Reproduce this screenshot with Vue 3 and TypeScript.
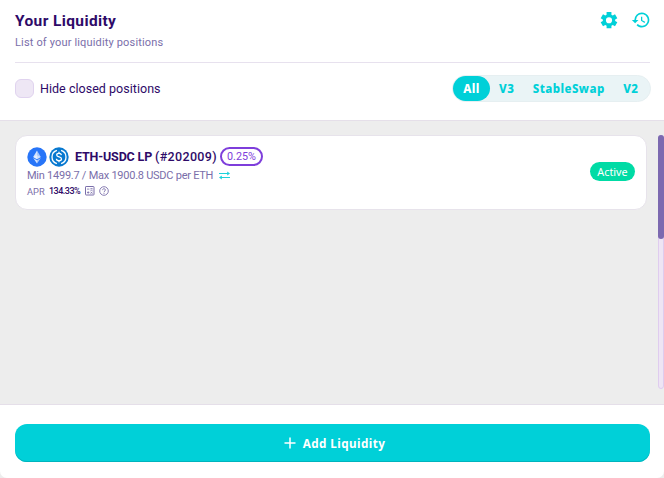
<script setup lang="ts">
import { ref } from 'vue'

interface Position {
  pair: string
  id: string
  fee: string
  range: string
  apr: string
  status: string
}

const tabs: string[] = ['All', 'V3', 'StableSwap', 'V2']
const activeTab = ref('All')
const hideClosed = ref(false)
const positions: Position[] = [
  {
    pair: 'ETH-USDC LP',
    id: '(#202009)',
    fee: '0.25%',
    range: 'Min 1499.7 / Max 1900.8 USDC per ETH',
    apr: '134.33%',
    status: 'Active',
  },
]
</script>

<template>
  <main class="panel">
    <header class="top">
      <div class="head">
        <div>
          <h1 class="title"><span>Your Liquidity</span></h1>
          <p class="subtitle"><span>List of your liquidity positions</span></p>
        </div>
        <div class="actions">
          <svg class="action" viewBox="0 0 24 24" aria-label="Settings">
            <path fill-rule="evenodd" d="M9.1 2.5h5.8v3.1l1.6.9 2.7-1.5 2.8 4.9-2.6 1.5v1.8l2.6 1.5-2.8 4.9-2.7-1.5-1.6.9v2.9H9.1V19l-1.6-.9-2.7 1.5L2 14.7l2.6-1.5v-1.8L2 9.9 4.8 5l2.7 1.5 1.6-.9zM12 8.6a3.7 3.7 0 1 0 0 7.4 3.7 3.7 0 0 0 0-7.4z" />
          </svg>
          <svg class="action" viewBox="0 0 24 24" aria-label="History">
            <path d="M13 3a9 9 0 0 0-9 9H1l3.9 3.9L9 12H6a7 7 0 1 1 2.06 4.94l-1.42 1.42A9 9 0 1 0 13 3zm-1 5v5l4.25 2.52.77-1.28-3.52-2.09V8H12z" />
          </svg>
        </div>
      </div>
      <div class="filters">
        <button class="toggle" role="checkbox" :aria-checked="hideClosed" @click="hideClosed = !hideClosed">
          <span class="box"></span><span class="toggle-label">Hide closed positions</span>
        </button>
        <nav class="tabs">
          <button
            v-for="tab in tabs"
            :key="tab"
            class="tab"
            :class="{ active: tab === activeTab }"
            @click="activeTab = tab"
          >{{ tab }}</button>
        </nav>
      </div>
    </header>

    <section class="body">
      <div class="list">
        <article v-for="p in positions" :key="p.id" class="card">
          <div class="info">
            <div class="row-title">
              <svg class="coin" viewBox="0 0 20 20">
                <circle cx="10" cy="10" r="9.7" fill="#2775f8" />
                <path d="M10 3.6 6.2 10.1 10 12.3z" fill="#d4e4fe" />
                <path d="M10 3.6 13.8 10.1 10 12.3z" fill="#a9c8fc" />
                <path d="M6.2 11 10 13.2V16.6z" fill="#d4e4fe" />
                <path d="M13.8 11 10 13.2V16.6z" fill="#a9c8fc" />
                <path d="M6.2 10.1 10 8.3l3.8 1.8-3.8 2.2z" fill="#fff" opacity=".45" />
              </svg>
              <svg class="coin second" viewBox="0 0 20 20">
                <circle cx="10" cy="10" r="9.7" fill="#0879d0" />
                <g fill="none" stroke="#fff" stroke-width="1.3">
                  <path d="M7.9 3.4a6.9 6.9 0 0 0 0 13.2M12.1 3.4a6.9 6.9 0 0 1 0 13.2" />
                  <path d="M12.4 8.2C12.2 6.9 11.3 6.4 10 6.4c-1.4 0-2.3.7-2.3 1.7 0 2.5 4.8 1.2 4.8 3.8 0 1.1-1 1.8-2.5 1.8s-2.5-.7-2.6-2M10 4.8v1.6M10 13.7v1.6" />
                </g>
              </svg>
              <span class="pair">{{ p.pair }}</span>
              <span class="pid">{{ p.id }}</span>
              <span class="fee"><span>{{ p.fee }}</span></span>
            </div>
            <div class="row-range">
              <span class="range">{{ p.range }}</span>
              <svg class="swap" viewBox="0 0 11 9">
                <path d="M0 2.5h9M11 6.5H2" fill="none" stroke="#1fd1da" />
                <path d="M8.2.6 11 2.5 8.2 4.4zM2.8 4.6 0 6.5 2.8 8.4z" fill="#1fd1da" />
              </svg>
            </div>
            <div class="row-apr">
              <span class="apr">APR</span>
              <span class="apr-value">{{ p.apr }}</span>
              <svg class="mini calc" viewBox="0 0 10 10">
                <g fill="none" stroke="#7a6eaa">
                  <rect x=".5" y=".5" width="8.5" height="8.5" rx=".6" />
                  <path d="M2 3.1h2.4M5.4 2.6h2.2M5.4 4.2h2.2M2 6.5h2.4M3.2 5.3v2.4M5.5 5.7l2 2M7.5 5.7l-2 2" stroke-width=".8" />
                </g>
              </svg>
              <svg class="mini help" viewBox="0 0 10 10">
                <g fill="none" stroke="#7a6eaa" stroke-width=".9">
                  <circle cx="5" cy="5" r="4.3" />
                  <path d="M3.6 4.1c0-1.9 2.8-1.8 2.8-.1 0 1-1.4 1.1-1.4 2.2M5 6.9v1" />
                </g>
              </svg>
            </div>
          </div>
          <span class="status"><span>{{ p.status }}</span></span>
        </article>
      </div>
      <div class="track"><div class="thumb"></div></div>
    </section>

    <footer class="foot">
      <button class="add">
        <svg class="plus" viewBox="0 0 12 12"><path d="M6 .5v11M.5 6h11" /></svg>
        <span>Add Liquidity</span>
      </button>
    </footer>
  </main>
</template>

<style>
body {
  background: #ededed;
}
</style>

<style scoped>
* {
  box-sizing: border-box;
}
.panel {
  width: 664px;
  height: 478px;
  display: flex;
  flex-direction: column;
  overflow: hidden;
  font-family: Roboto, "Noto Sans", sans-serif;
  color: #2e0a68;
  background: #ededed;
  white-space: nowrap;
}
button {
  border: 0;
  padding: 0;
  margin: 0;
  background: none;
  font: inherit;
  color: inherit;
}
.top {
  height: 121px;
  flex: none;
  padding: 0 14px 0 15px;
  background: #fff;
  border-bottom: 1px solid #e5dfe9;
}
.head {
  height: 63px;
  display: flex;
  justify-content: space-between;
  border-bottom: 1px solid #e7e1ee;
}
.title {
  margin: 10px 0 0;
  font-size: 15.5px;
  line-height: 22px;
  font-weight: 700;
  letter-spacing: 0.38px;
}
.subtitle {
  margin: 3px 0 0;
  font-size: 11px;
  line-height: 16px;
  color: #7a6eaa;
  letter-spacing: 0.16px;
}
.actions {
  display: flex;
  gap: 12px;
  padding-top: 10px;
  margin-right: -1px;
}
.action {
  width: 20px;
  height: 20px;
  fill: #00d0d8;
}
.filters {
  height: 51px;
  display: flex;
  align-items: center;
  justify-content: space-between;
}
.toggle {
  display: flex;
  align-items: center;
  gap: 6px;
}
.box {
  width: 19px;
  height: 19px;
  border: 1px solid #e0d3ef;
  border-radius: 6px;
  background: #eee7f5;
}
.toggle-label {
  font-size: 12.5px;
  line-height: 18px;
  letter-spacing: 0.03px;
}
.tabs {
  width: 199px;
  height: 27px;
  margin-right: -1px;
  display: flex;
  border: 1px solid #e6eff1;
  border-radius: 14px;
  background: #eaf4f6;
}
.tab {
  height: 25px;
  padding: 0 9px 0 9.5px;
  flex: none;
  border-radius: 13px;
  font-family: "Noto Sans", sans-serif;
  font-size: 11.5px;
  font-weight: 800;
  letter-spacing: 0.45px;
  color: #00d0d8;
}
.tab.active {
  width: 36.5px;
  background: #00d0d8;
  color: #fff;
}
.body {
  height: 283px;
  flex: none;
  display: flex;
  justify-content: space-between;
  padding: 14px 0 14px 15px;
}
.list {
  width: 632px;
}
.card {
  height: 75px;
  display: flex;
  justify-content: space-between;
  align-items: center;
  padding: 0 12px;
  border: 1px solid #e7e3eb;
  border-radius: 12px;
  background: #fff;
}
.info {
  height: 73px;
  padding-top: 10px;
  margin-left: -1px;
}
.row-title {
  height: 21px;
  display: flex;
  align-items: center;
}
.coin {
  width: 20px;
  height: 20px;
}
.second {
  margin-left: 2px;
}
.pair {
  width: 80px;
  margin-left: 6px;
  font-size: 12.5px;
  font-weight: 700;
  letter-spacing: -0.16px;
}
.pid {
  width: 65px;
  font-size: 12.5px;
  font-weight: 500;
  letter-spacing: 0.34px;
}
.fee {
  width: 43px;
  height: 19px;
  display: flex;
  align-items: center;
  justify-content: center;
  border: 2px solid #7e3edb;
  border-radius: 10px;
  font-size: 10.8px;
  color: #7e3edb;
}
.row-range {
  height: 17px;
  display: flex;
  align-items: center;
  font-size: 11px;
  letter-spacing: -0.25px;
  color: #7a6eaa;
}
.range {
  width: 192px;
}
.swap {
  width: 11px;
  height: 9px;
}
.row-apr {
  height: 14px;
  display: flex;
  align-items: center;
  font-size: 9.3px;
}
.apr {
  width: 22px;
  color: #7a6eaa;
}
.apr-value {
  width: 36px;
  font-weight: 500;
  font-size: 9px;
  letter-spacing: -0.5px;
}
.mini {
  width: 10px;
  height: 10px;
}
.help {
  margin-left: 4px;
}
.status {
  width: 45px;
  height: 19px;
  display: flex;
  align-items: center;
  justify-content: center;
  margin: 0 -1px 2px 0;
  border-radius: 10px;
  background: #00dba5;
  color: #fff;
  font-family: "Noto Sans", sans-serif;
  font-size: 10.8px;
}
.track {
  width: 6px;
  height: 254px;
  border: 1px solid #dfccef;
  border-radius: 4px;
  background: #eee5f4;
}
.thumb {
  width: 6px;
  height: 104px;
  margin: -1px;
  border-radius: 3px;
  background: #7c69b0;
}
.foot {
  height: 74px;
  flex: none;
  padding: 19px 14px 0 15px;
  background: #fff;
  border-top: 1px solid #e5dfe9;
  border-radius: 0 0 7px 7px;
}
.add {
  width: 100%;
  height: 38px;
  display: flex;
  align-items: center;
  justify-content: center;
  gap: 7px;
  padding-left: 4px;
  border-radius: 12px;
  background: #00d0d8;
  box-shadow: inset 0 -1px 0 #00b4bd;
  color: #fff;
  font-family: "Noto Sans", sans-serif;
  font-size: 11.7px;
  font-weight: 700;
  letter-spacing: 0.42px;
}
.plus {
  width: 12px;
  height: 12px;
  fill: none;
  stroke: #fff;
  stroke-width: 1.5;
}
</style>
